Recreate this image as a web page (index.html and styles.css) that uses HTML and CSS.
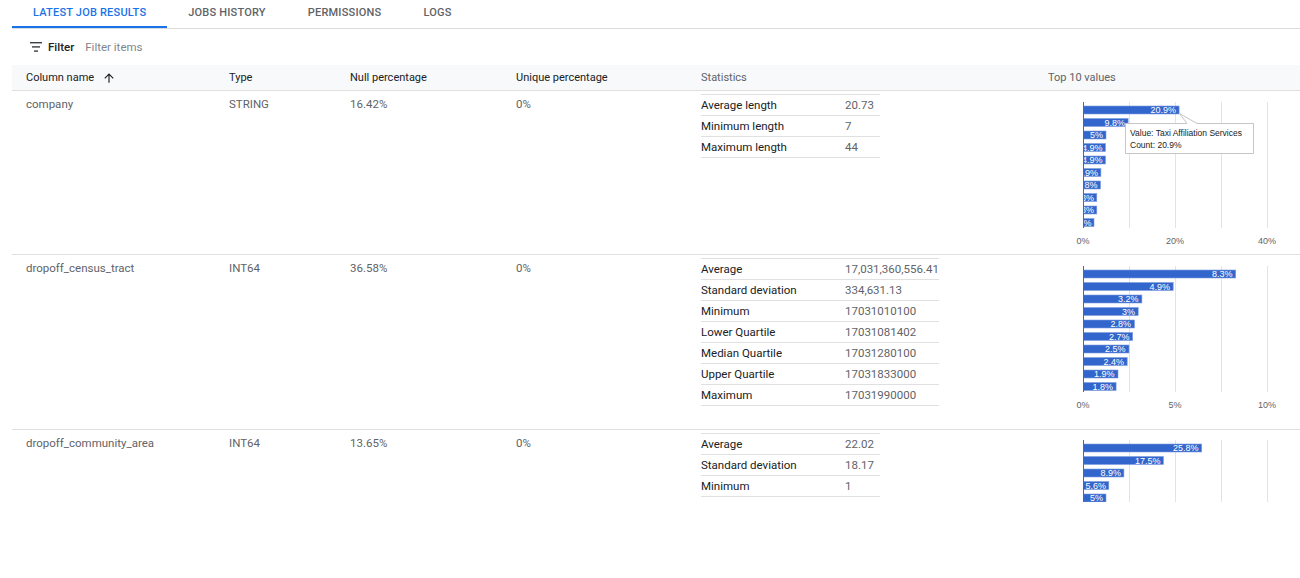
FILE: index.html
```html
<!DOCTYPE html>
<html lang="en">
<head>
<meta charset="utf-8">
<title>Job results</title>
<link rel="stylesheet" href="styles.css">
</head>
<body>
<div class="page">
  <nav class="tabs">
    <div class="tab active">Latest job results</div>
    <div class="tab">Jobs history</div>
    <div class="tab">Permissions</div>
    <div class="tab">Logs</div>
  </nav>

  <div class="filter-bar">
    <svg class="filter-icon" width="12" height="10" viewBox="0 0 12 10"><rect x="0" y="0" width="12" height="1.4" fill="#3c4043"/><rect x="2" y="4.2" width="8" height="1.4" fill="#3c4043"/><rect x="4" y="8.4" width="4" height="1.4" fill="#3c4043"/></svg>
    <span class="filter-label">Filter</span>
    <span class="filter-input">Filter items</span>
  </div>

  <div class="table">
    <div class="row head">
      <div class="cell hcell dark">Column name
        <svg class="sort-icon" width="14" height="14" viewBox="0 0 24 24"><path d="M4 12l1.41 1.41L11 7.83V20h2V7.83l5.58 5.59L20 12l-8-8-8 8z" fill="#202124"/></svg>
      </div>
      <div class="cell hcell dark">Type</div>
      <div class="cell hcell dark">Null percentage</div>
      <div class="cell hcell dark">Unique percentage</div>
      <div class="cell hcell">Statistics</div>
      <div class="cell hcell">Top 10 values</div>
    </div>

    <!-- row 1 -->
    <div class="row">
      <div class="cell text">company</div>
      <div class="cell text">STRING</div>
      <div class="cell text">16.42%</div>
      <div class="cell text">0%</div>
      <div class="cell stats">
        <table class="stats-table">
          <tr><td class="lbl">Average length</td><td class="val">20.73</td></tr>
          <tr><td class="lbl">Minimum length</td><td class="val">7</td></tr>
          <tr><td class="lbl">Maximum length</td><td class="val">44</td></tr>
        </table>
      </div>
      <div class="cell chart">
        <svg width="266" height="159" viewBox="0 0 266 159" font-family="Liberation Sans, Arial, sans-serif">
          <g stroke="#e3e3e3" stroke-width="1">
            <line x1="95.5" y1="7" x2="95.5" y2="133"/><line x1="141.5" y1="7" x2="141.5" y2="133"/><line x1="187.5" y1="7" x2="187.5" y2="133"/><line x1="233.5" y1="7" x2="233.5" y2="133"/>
          </g>
          <g fill="#3366cc" stroke="#7f9fe0" stroke-width="0.6">
            <rect x="49" y="11" width="96.1" height="8"/>
            <rect x="49" y="23.5" width="45.1" height="8"/>
            <rect x="49" y="36" width="23" height="8"/>
            <rect x="49" y="48.5" width="22.5" height="8"/>
            <rect x="49" y="61" width="22.5" height="8"/>
            <rect x="49" y="73.5" width="17.9" height="8"/>
            <rect x="49" y="86" width="17.5" height="8"/>
            <rect x="49" y="98.5" width="13.8" height="8"/>
            <rect x="49" y="111" width="13.8" height="8"/>
            <rect x="49" y="123.5" width="11" height="8"/>
          </g>
          <g fill="#ffffff" font-size="9" text-anchor="end">
            <text x="142" y="18.3">20.9%</text>
            <text x="91" y="30.8">9.8%</text>
            <text x="69" y="43.3">5%</text>
            <text x="68.5" y="55.8">4.9%</text>
            <text x="68.5" y="68.3">4.9%</text>
            <text x="64" y="80.8">3.9%</text>
            <text x="63.5" y="93.3">3.8%</text>
            <text x="60" y="105.8">3%</text>
            <text x="60" y="118.3">3%</text>
            <text x="57.5" y="130.8">2.4%</text>
          </g>
          <rect x="0" y="0" width="49" height="140" fill="#ffffff"/>
          <line x1="49.5" y1="7" x2="49.5" y2="133" stroke="#666" stroke-width="1"/>
          <g fill="#5f6368" font-size="9" text-anchor="middle">
            <text x="49" y="148.5">0%</text>
            <text x="141" y="148.5">20%</text>
            <text x="233" y="148.5">40%</text>
          </g>
          <g class="tooltip">
            <path d="M91.5,28.5 H153 L145.5,18.5 L163,28.5 H219.5 V58.5 H91.5 Z" fill="#ffffff" stroke="#c6c6c6" stroke-width="1"/>
            <text x="96" y="41" font-size="8.5" fill="#222">Value: Taxi Affiliation Services</text>
            <text x="96" y="52.5" font-size="8.5" fill="#222">Count: 20.9%</text>
          </g>
        </svg>
      </div>
    </div>

    <!-- row 2 -->
    <div class="row">
      <div class="cell text">dropoff_census_tract</div>
      <div class="cell text">INT64</div>
      <div class="cell text">36.58%</div>
      <div class="cell text">0%</div>
      <div class="cell stats">
        <table class="stats-table">
          <tr><td class="lbl">Average</td><td class="val">17,031,360,556.41</td></tr>
          <tr><td class="lbl">Standard deviation</td><td class="val">334,631.13</td></tr>
          <tr><td class="lbl">Minimum</td><td class="val">17031010100</td></tr>
          <tr><td class="lbl">Lower Quartile</td><td class="val">17031081402</td></tr>
          <tr><td class="lbl">Median Quartile</td><td class="val">17031280100</td></tr>
          <tr><td class="lbl">Upper Quartile</td><td class="val">17031833000</td></tr>
          <tr><td class="lbl">Maximum</td><td class="val">17031990000</td></tr>
        </table>
      </div>
      <div class="cell chart">
        <svg width="266" height="159" viewBox="0 0 266 159" font-family="Liberation Sans, Arial, sans-serif">
          <g stroke="#e3e3e3" stroke-width="1">
            <line x1="95.5" y1="7" x2="95.5" y2="133"/><line x1="141.5" y1="7" x2="141.5" y2="133"/><line x1="187.5" y1="7" x2="187.5" y2="133"/><line x1="233.5" y1="7" x2="233.5" y2="133"/>
          </g>
          <g fill="#3366cc" stroke="#7f9fe0" stroke-width="0.6">
            <rect x="49" y="11" width="152.7" height="8"/>
            <rect x="49" y="23.5" width="90.2" height="8"/>
            <rect x="49" y="36" width="58.9" height="8"/>
            <rect x="49" y="48.5" width="55.2" height="8"/>
            <rect x="49" y="61" width="51.5" height="8"/>
            <rect x="49" y="73.5" width="49.7" height="8"/>
            <rect x="49" y="86" width="46" height="8"/>
            <rect x="49" y="98.5" width="44.2" height="8"/>
            <rect x="49" y="111" width="35" height="8"/>
            <rect x="49" y="123.5" width="33.1" height="8"/>
          </g>
          <g fill="#ffffff" font-size="9" text-anchor="end">
            <text x="198.5" y="18.3">8.3%</text>
            <text x="136" y="30.8">4.9%</text>
            <text x="104.5" y="43.3">3.2%</text>
            <text x="101" y="55.8">3%</text>
            <text x="97" y="68.3">2.8%</text>
            <text x="95.5" y="80.8">2.7%</text>
            <text x="91.5" y="93.3">2.5%</text>
            <text x="90" y="105.8">2.4%</text>
            <text x="80.5" y="118.3">1.9%</text>
            <text x="79" y="130.8">1.8%</text>
          </g>
          <rect x="0" y="0" width="49" height="140" fill="#ffffff"/>
          <line x1="49.5" y1="7" x2="49.5" y2="133" stroke="#666" stroke-width="1"/>
          <g fill="#5f6368" font-size="9" text-anchor="middle">
            <text x="49" y="148.5">0%</text>
            <text x="141" y="148.5">5%</text>
            <text x="233" y="148.5">10%</text>
          </g>
        </svg>
      </div>
    </div>

    <!-- row 3 (cut off by the panel's bottom edge) -->
    <div class="row">
      <div class="cell text">dropoff_community_area</div>
      <div class="cell text">INT64</div>
      <div class="cell text">13.65%</div>
      <div class="cell text">0%</div>
      <div class="cell stats">
        <table class="stats-table">
          <tr><td class="lbl">Average</td><td class="val">22.02</td></tr>
          <tr><td class="lbl">Standard deviation</td><td class="val">18.17</td></tr>
          <tr><td class="lbl">Minimum</td><td class="val">1</td></tr>
        </table>
      </div>
      <div class="cell chart">
        <svg width="266" height="159" viewBox="0 0 266 159" font-family="Liberation Sans, Arial, sans-serif">
          <g stroke="#e3e3e3" stroke-width="1">
            <line x1="95.5" y1="6" x2="95.5" y2="133"/><line x1="141.5" y1="6" x2="141.5" y2="133"/><line x1="187.5" y1="6" x2="187.5" y2="133"/><line x1="233.5" y1="6" x2="233.5" y2="133"/>
          </g>
          <g fill="#3366cc" stroke="#7f9fe0" stroke-width="0.6">
            <rect x="49" y="10" width="118.7" height="8"/>
            <rect x="49" y="22.5" width="80.5" height="8"/>
            <rect x="49" y="35" width="40.9" height="8"/>
            <rect x="49" y="47.5" width="25.8" height="8"/>
            <rect x="49" y="60" width="23" height="8"/>
          </g>
          <g fill="#ffffff" font-size="9" text-anchor="end">
            <text x="164.5" y="17.3">25.8%</text>
            <text x="126.5" y="29.8">17.5%</text>
            <text x="87" y="42.3">8.9%</text>
            <text x="72" y="54.8">5.6%</text>
            <text x="69" y="66.6">5%</text>
          </g>
          <rect x="0" y="0" width="49" height="140" fill="#ffffff"/>
          <line x1="49.5" y1="6" x2="49.5" y2="133" stroke="#666" stroke-width="1"/>
        </svg>
      </div>
    </div>
  </div>
</div>
</body>
</html>
```

FILE: styles.css
```css
* { box-sizing: border-box; }

html, body {
  margin: 0;
  padding: 0;
  background: #ffffff;
}

body {
  font-family: Roboto, "Liberation Sans", Arial, sans-serif;
  color: #202124;
}

.page {
  height: 502px;
  overflow: hidden;
  padding-left: 12px;
}

/* Tabs */
.tabs {
  display: flex;
  height: 29px;
  border-bottom: 1px solid #dadce0;
}

.tab {
  padding: 0 21px;
  height: 28px;
  line-height: 25px;
  font-size: 11px;
  font-weight: 500;
  text-transform: uppercase;
  color: #5f6368;
  border-bottom: 2px solid transparent;
  letter-spacing: 0.2px;
}

.tab.active {
  color: #1a73e8;
  border-bottom-color: #1a73e8;
}

/* Filter bar */
.filter-bar {
  display: flex;
  align-items: center;
  height: 36px;
  padding-left: 18px;
  font-size: 11.5px;
}

.filter-icon {
  display: block;
  margin-right: 6px;
}

.filter-label {
  font-weight: 500;
  color: #202124;
  margin-right: 11px;
}

.filter-input {
  color: #80868b;
}

/* Table */
.row {
  display: grid;
  grid-template-columns: 203px 121px 166px 185px 347px 1fr;
  border-bottom: 1px solid #e0e0e0;
  padding-top: 4px;
}

.row.head {
  background: #f8f9fa;
  padding-top: 0;
  height: 26px;
  align-items: center;
}

.cell {
  padding-left: 14px;
}

.hcell {
  font-size: 11px;
  color: #5f6368;
  display: flex;
  align-items: center;
}

.hcell.dark {
  color: #202124;
}

.sort-icon {
  margin-left: 8px;
  display: block;
}

.text {
  font-size: 11.5px;
  line-height: 18px;
  color: #5f6368;
}

.stats {
  margin-top: -1px;
  padding-bottom: 23px;
}

.stats-table {
  border-collapse: collapse;
  border-top: 1px solid #e0e0e0;
  font-size: 11.5px;
}

.stats-table td {
  height: 21px;
  padding: 0;
  border-bottom: 1px solid #e0e0e0;
  vertical-align: middle;
}

.stats-table .lbl {
  width: 144px;
  color: #202124;
}

.stats-table .val {
  color: #5f6368;
  min-width: 35px;
  padding-right: 0;
}

.chart {
  padding-left: 0;
}

.chart svg {
  display: block;
}
```
